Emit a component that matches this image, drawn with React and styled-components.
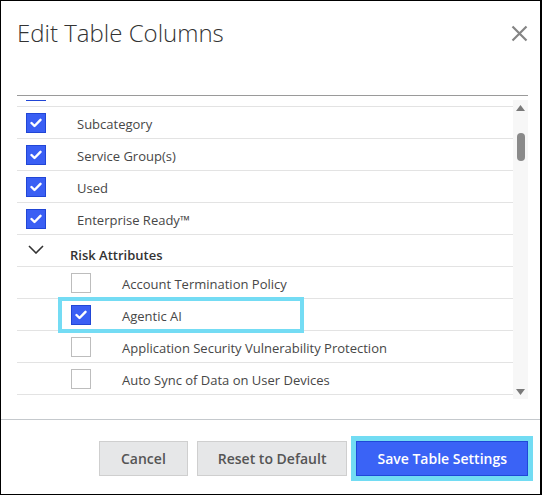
import React, { useLayoutEffect, useRef } from "react";
import styled, { createGlobalStyle } from "styled-components";

const Global = createGlobalStyle`
  html, body { margin: 0; padding: 0; background: #fff; }
  body { font-family: "Open Sans", "Liberation Sans", sans-serif; }
  * { box-sizing: border-box; }
`;

const Frame = styled.div`
  width: 542px;
  height: 495px;
  border: 1px solid #000;
  border-right-width: 2px;
  display: flex;
  flex-direction: column;
  background: #fff;
`;

const Header = styled.div`
  height: 94px;
  display: flex;
  align-items: flex-start;
  justify-content: space-between;
  padding: 16px 12px 0 16px;
`;

const Title = styled.h1`
  margin: 0;
  font-family: "Open Sans", "Liberation Sans", sans-serif;
  font-weight: 300;
  font-size: 24px;
  line-height: 32px;
  color: #333;
`;

const CloseButton = styled.button`
  border: 0;
  background: none;
  padding: 0;
  margin: 7px 0 0 0;
  width: 18px;
  height: 18px;
  display: flex;
  align-items: center;
  justify-content: center;
  cursor: pointer;
`;

const ListBox = styled.div`
  margin: 0 12px 0 16px;
  border-top: 1px solid #9a9a9a;
  padding-top: 4px;
`;

const ListBody = styled.div`
  display: flex;
  height: 299px;
`;

const Viewport = styled.div`
  flex: 1;
  overflow: hidden;
`;

const Row = styled.div`
  position: relative;
  height: 32px;
  border-bottom: 1px solid #e3e3e3;
  display: flex;
  align-items: center;
  padding-left: ${(p) => (p.$nested ? 54 : 9)}px;
  gap: 31px;
`;

const GroupRow = styled.div`
  height: 32px;
  border-bottom: 1px solid #e3e3e3;
  display: flex;
  align-items: flex-end;
  padding: 0 0 2px 11px;
  gap: 26px;
`;

const Chevron = styled.span`
  display: flex;
  align-self: center;
`;

const GroupLabel = styled.span`
  font-size: 13px;
  font-weight: 600;
  color: #333;
  line-height: 18px;
`;

const Box = styled.span`
  flex: none;
  width: 20px;
  height: 20px;
  border: 1px solid ${(p) => (p.$checked ? "#2146d6" : "#bdbdbd")};
  background: ${(p) => (p.$checked ? "#3a5ff4" : "#fff")};
  display: flex;
  align-items: center;
  justify-content: center;
`;

const Label = styled.span`
  font-size: 13px;
  color: #474747;
  line-height: 18px;
  padding-top: 2px;
  white-space: nowrap;
`;

const Highlight = styled.span`
  position: absolute;
  left: 41px;
  top: -2px;
  width: 246px;
  height: 36px;
  border: 4px solid #74dcf4;
  pointer-events: none;
`;

const Track = styled.div`
  width: 15px;
  background: #f7f7f7;
  display: flex;
  flex-direction: column;
  align-items: center;
`;

const Arrow = styled.span`
  height: 15px;
  width: 15px;
  display: flex;
  align-items: center;
  justify-content: center;
`;

const Thumb = styled.span`
  width: 8px;
  height: 28px;
  margin-top: 18px;
  border-radius: 4px;
  background: #8a8a8a;
`;

const Spacer = styled.span`
  flex: 1;
`;

const Footer = styled.div`
  margin-top: 20px;
  border-top: 1px solid #c5c9cd;
  flex: 1;
  display: flex;
  justify-content: flex-end;
  align-items: flex-start;
  gap: 9px;
  padding: 21px 12px 0 0;
`;

const Button = styled.button`
  height: 35px;
  padding: 0 ${(p) => p.$pad}px;
  font-family: "Open Sans", "Liberation Sans", sans-serif;
  font-size: 14px;
  font-weight: 600;
  border: 1px solid ${(p) => (p.$primary ? "#1f48d8" : "#cfcfcf")};
  background: ${(p) => (p.$primary ? "#3a63f6" : "#e6e7e8")};
  color: ${(p) => (p.$primary ? "#fff" : "#555")};
  box-shadow: ${(p) => (p.$primary ? "0 0 0 5px #72dcf3" : "none")};
  cursor: pointer;
`;

const Check = () => (
  <svg width="12" height="10" viewBox="0 0 12 10">
    <polyline points="1.5,5 4.5,8 10.5,1.8" fill="none" stroke="#fff" strokeWidth="2.4" strokeLinecap="round" strokeLinejoin="round" />
  </svg>
);

const CheckBox = ({ checked }) => (
  <Box $checked={checked}>{checked && <Check />}</Box>
);

const topRows = [
  { label: "Category", checked: true },
  { label: "Subcategory", checked: true },
  { label: "Service Group(s)", checked: true },
  { label: "Used", checked: true },
  { label: "Enterprise Ready™", checked: true },
];

const riskRows = [
  { label: "Account Termination Policy", checked: false },
  { label: "Agentic AI", checked: true, focus: true },
  { label: "Application Security Vulnerability Protection", checked: false },
  { label: "Auto Sync of Data on User Devices", checked: false },
  { label: "Backup Policy", checked: false },
];

export default function App() {
  const ref = useRef(null);
  useLayoutEffect(() => {
    if (ref.current) ref.current.scrollTop = 25;
  }, []);

  return (
    <>
      <Global />
      <Frame>
        <Header>
          <Title>Edit Table Columns</Title>
          <CloseButton aria-label="Close">
            <svg width="17" height="17" viewBox="0 0 17 17">
              <path d="M1.5 1.5 L15.5 15.5 M15.5 1.5 L1.5 15.5" stroke="#858585" strokeWidth="2.2" />
            </svg>
          </CloseButton>
        </Header>
        <ListBox>
          <ListBody>
            <Viewport ref={ref}>
              {topRows.map((r) => (
                <Row key={r.label}>
                  <CheckBox checked={r.checked} />
                  <Label>{r.label}</Label>
                </Row>
              ))}
              <GroupRow>
                <Chevron>
                  <svg width="16" height="9" viewBox="0 0 16 9">
                    <polyline points="1,1 8,8 15,1" fill="none" stroke="#333" strokeWidth="1.6" />
                  </svg>
                </Chevron>
                <GroupLabel>Risk Attributes</GroupLabel>
              </GroupRow>
              {riskRows.map((r) => (
                <Row key={r.label} $nested>
                  <CheckBox checked={r.checked} />
                  <Label>{r.label}</Label>
                  {r.focus && <Highlight />}
                </Row>
              ))}
            </Viewport>
            <Track>
              <Arrow>
                <svg width="9" height="6" viewBox="0 0 9 6">
                  <polygon points="0,6 4.5,0 9,6" fill="#7a7a7a" />
                </svg>
              </Arrow>
              <Thumb />
              <Spacer />
              <Arrow>
                <svg width="9" height="6" viewBox="0 0 9 6">
                  <polygon points="0,0 9,0 4.5,6" fill="#7a7a7a" />
                </svg>
              </Arrow>
            </Track>
          </ListBody>
        </ListBox>
        <Footer>
          <Button $pad={21}>Cancel</Button>
          <Button $pad={20}>Reset to Default</Button>
          <Button $primary $pad={20}>Save Table Settings</Button>
        </Footer>
      </Frame>
    </>
  );
}
